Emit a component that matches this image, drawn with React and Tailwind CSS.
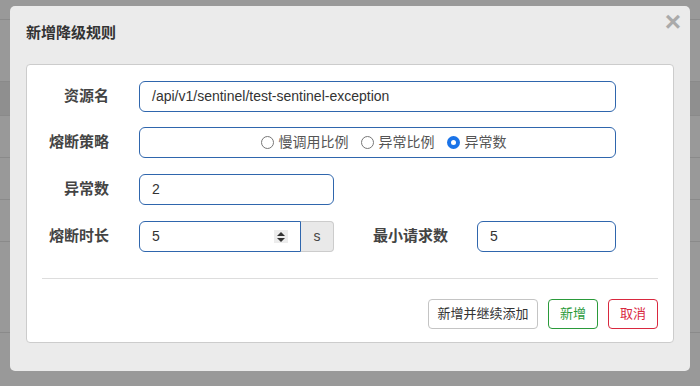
import React from "react";

const font = { fontFamily: '"Liberation Sans", "Noto Sans CJK SC", sans-serif' };

function Radio({ label, checked }) {
  return (
    <label className="flex items-center">
      {checked ? (
        <span className="w-[13px] h-[13px] rounded-full bg-[#1a73e8] flex items-center justify-center">
          <span className="w-[5px] h-[5px] rounded-full bg-white" />
        </span>
      ) : (
        <span className="w-[13px] h-[13px] rounded-full border border-[#777] bg-white" />
      )}
      <span className="ml-[5px] text-[14px] text-[#555]">{label}</span>
    </label>
  );
}

function Spinner() {
  return (
    <span className="w-[14px] h-[13px] bg-[#ececec] flex flex-col items-center justify-center gap-[2px]">
      <svg width="8" height="4" viewBox="0 0 8 4">
        <path d="M0 4 L4 0 L8 4 Z" fill="#333" />
      </svg>
      <svg width="8" height="4" viewBox="0 0 8 4">
        <path d="M0 0 L4 4 L8 0 Z" fill="#333" />
      </svg>
    </span>
  );
}

export default function App() {
  const label = "w-[82px] text-right text-[15px] font-bold text-[#444] shrink-0";
  const input =
    "h-[31px] border border-[#2f66ad] rounded-[6px] bg-white flex items-center pl-[12px] text-[14px] text-[#333]";

  return (
    <div className="relative w-[700px] h-[386px] bg-[#999] overflow-hidden" style={font}>
      {/* table rows behind the overlay */}
      <div className="flex flex-col">
        <div className="h-[20px] border-b border-[#8a8a8a]" />
        <div className="h-[62px] border-b border-[#8a8a8a]" />
        <div className="h-[34px] border-b border-[#8a8a8a] bg-[#8f8f8f]" />
        <div className="h-[42px] border-b border-[#8a8a8a]" />
        <div className="h-[42px] border-b border-[#8a8a8a]" />
        <div className="h-[42px] border-b border-[#8a8a8a]" />
        <div className="h-[91px] border-b border-[#8a8a8a]" />
      </div>

      {/* dialog */}
      <div className="absolute left-[10px] top-[6px] w-[680px] h-[365px] bg-[#ebebeb] rounded-[5px]">
        <div className="h-[58px] flex items-start justify-between pl-[16px] pr-[9px]">
          <h3 className="mt-[16px] text-[15px] font-bold text-[#333]">新增降级规则</h3>
          <span className="mt-[2px] text-[28px] leading-[28px] font-bold text-[#aaa]">×</span>
        </div>

        <div className="mx-[16px] h-[279px] bg-white border border-[#ccc] rounded-[4px] px-[15px] pt-[16px] flex flex-col">
          {/* resource */}
          <div className="flex items-center -ml-[15px]">
            <span className={label}>资源名</span>
            <div className={`${input} ml-[30px] w-[477px]`}>/api/v1/sentinel/test-sentinel-exception</div>
          </div>

          {/* strategy */}
          <div className="flex items-center -ml-[15px] mt-[15px]">
            <span className={label}>熔断策略</span>
            <div className={`${input} ml-[30px] w-[477px] justify-center pl-0 gap-[12px]`}>
              <Radio label="慢调用比例" />
              <Radio label="异常比例" />
              <Radio label="异常数" checked />
            </div>
          </div>

          {/* count */}
          <div className="flex items-center -ml-[15px] mt-[16px]">
            <span className={label}>异常数</span>
            <div className={`${input} ml-[30px] w-[195px]`}>2</div>
          </div>

          {/* time window + min request */}
          <div className="flex items-center -ml-[15px] mt-[16px]">
            <span className={label}>熔断时长</span>
            <div className="ml-[30px] flex h-[31px]">
              <div className="w-[162px] border border-[#2f66ad] rounded-l-[6px] bg-white flex items-center justify-between pl-[12px] pr-[12px] text-[14px] text-[#333]">
                <span>5</span>
                <Spinner />
              </div>
              <div className="w-[33px] border border-l-0 border-[#ccc] bg-[#e9e9e9] rounded-r-[4px] flex items-center justify-center text-[14px] text-[#444]">
                s
              </div>
            </div>
            <span className="ml-[39px] text-[15px] font-bold text-[#444]">最小请求数</span>
            <div className={`${input} ml-[29px] w-[139px]`}>5</div>
          </div>

          <div className="mt-[26px] border-t border-[#ddd]" />

          <div className="mt-[20px] flex justify-end gap-[10px]">
            <button className="w-[110px] h-[30px] border border-[#c4c4c4] rounded-[4px] bg-white text-[13px] text-[#333]">
              新增并继续添加
            </button>
            <button className="w-[50px] h-[30px] border border-[#2a9a3a] rounded-[4px] bg-white text-[13px] text-[#2a9a3a]">
              新增
            </button>
            <button className="w-[50px] h-[30px] border border-[#d9283f] rounded-[4px] bg-white text-[13px] text-[#d9283f]">
              取消
            </button>
          </div>
        </div>
      </div>
    </div>
  );
}
